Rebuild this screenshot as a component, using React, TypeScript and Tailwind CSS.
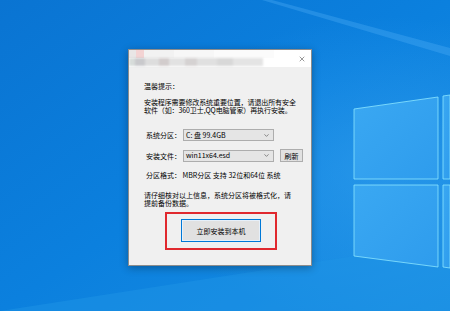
import { ChevronDown, X } from "lucide-react";

const font = { fontFamily: '"Noto Sans CJK SC", "Noto Sans", sans-serif' };

function Wallpaper() {
	return (
		<svg className="absolute inset-0" width="450" height="311" viewBox="0 0 450 311">
			<defs>
				<linearGradient id="bg" x1="0" y1="0" x2="1" y2="1">
					<stop offset="0" stopColor="#0a74d2" />
					<stop offset="0.5" stopColor="#0b80de" />
					<stop offset="1" stopColor="#1a8ee2" />
				</linearGradient>
				<linearGradient id="pane" x1="0" y1="0" x2="1" y2="1">
					<stop offset="0" stopColor="#3aa8f2" />
					<stop offset="1" stopColor="#2e9ced" />
				</linearGradient>
				<radialGradient id="glow" cx="0.85" cy="0.55" r="0.5">
					<stop offset="0" stopColor="#3fa9f5" stopOpacity="0.45" />
					<stop offset="1" stopColor="#3fa9f5" stopOpacity="0" />
				</radialGradient>
			</defs>
			<rect width="450" height="311" fill="url(#bg)" />
			<rect width="450" height="311" fill="url(#glow)" />
			{/* light ray top */}
			<path d="M272 0 L450 48 L450 56 L262 0 Z" fill="#4fb0f5" opacity="0.35" />
			{/* light floor ray */}
			<path d="M0 311 L354 256 L450 250 L450 311 Z" fill="#1d94e6" opacity="0.5" />
			{/* logo panes */}
			<path d="M354 109 L438 97 L438 179 L354 179 Z" fill="url(#pane)" stroke="#8ae6ff" strokeWidth="0.8" />
			<path d="M443 96 L450 95 L450 179 L443 179 Z" fill="url(#pane)" stroke="#8ae6ff" strokeWidth="0.8" />
			<path d="M354 185 L438 185 L438 267 L354 256 Z" fill="url(#pane)" stroke="#8ae6ff" strokeWidth="0.8" />
			<path d="M443 185 L450 185 L450 268 L443 267 Z" fill="url(#pane)" stroke="#8ae6ff" strokeWidth="0.8" />
		</svg>
	);
}

function Select({ value }: { value: string }) {
	return (
		<div className="flex h-[12px] w-[91px] items-center justify-between border border-[#adadad] bg-[#e5e5e5] pl-[2px] pr-[3px]">
			<span className="text-[7px] leading-none text-black">{value}</span>
			<ChevronDown className="h-[7px] w-[7px] text-[#444]" strokeWidth={2} />
		</div>
	);
}

export default function App() {
	return (
		<div className="relative h-[311px] w-[450px] overflow-hidden" style={font}>
			<Wallpaper />
			<div className="relative pl-[128px] pt-[49px]">
				<div className="flex h-[217px] w-[184px] flex-col overflow-hidden border border-[#8c8c8c] bg-[#f0f0f0] shadow-[0_2px_8px_rgba(0,0,0,0.3)]">
					{/* title bar, blurred */}
					<div className="flex h-[17px] shrink-0 items-center justify-between bg-white pr-[5px]">
						<div className="flex h-full flex-col">
							<div className="flex h-[8px]">
								<div className="w-[7px] bg-[#e9e6e6]" />
								<div className="w-[8px] bg-[#f3d3d3]" />
								<div className="w-[30px] bg-[#f2f2f2]" />
								<div className="w-[40px] bg-[#f7f7f7]" />
								<div className="w-[60px] bg-[#fbfbfb]" />
							</div>
							<div className="flex h-[8px] blur-[1px]">
								<div className="w-[6px] bg-[#d7dcda]" />
								<div className="w-[10px] bg-[#c9c9cc]" />
								<div className="w-[14px] bg-[#ddd]" />
								<div className="w-[10px] bg-[#d2cccc]" />
								<div className="w-[16px] bg-[#e2e2e2]" />
								<div className="w-[12px] bg-[#d5d2d2]" />
								<div className="w-[20px] bg-[#e0e0e0]" />
								<div className="w-[16px] bg-[#d8d8d8]" />
								<div className="w-[30px] bg-[#e4e4e4]" />
							</div>
						</div>
						<X className="h-[8px] w-[8px] text-[#333]" strokeWidth={1.5} />
					</div>

					<div className="flex flex-col whitespace-nowrap pl-[15px] pr-[6px] pt-[15px] text-[7px] leading-[8px] text-black">
						<div className="h-[8px]">温馨提示：</div>
						<div className="mt-[8px] h-[8px] tracking-[-0.1px]">安装程序需要修改系统重要位置，请退出所有安全</div>
						<div className="h-[8px] tracking-[-0.1px]">软件（如：360卫士,QQ电脑管家）再执行安装。</div>

						<div className="mt-[15px] flex items-center pl-[2px]">
							<span className="w-[37px]">系统分区：</span>
							<Select value="C: 盘 99.4GB" />
						</div>
						<div className="mt-[8px] flex items-center pl-[2px]">
							<span className="w-[37px]">安装文件：</span>
							<Select value="win11x64.esd" />
							<div className="ml-[6px] flex h-[13px] w-[23px] items-center justify-center border border-[#adadad] bg-[#e1e1e1]">
								刷新
							</div>
						</div>
						<div className="mt-[9px] h-[8px] pl-[2px]">分区格式：&nbsp;MBR分区 支持 32位和64位 系统</div>

						<div className="mt-[12px] h-[8px]">请仔细核对以上信息，系统分区将被格式化，请</div>
						<div className="h-[8px]">提前备份数据。</div>

						<div className="mt-[5px] flex pl-[21px]">
							<div className="flex h-[38px] w-[112px] items-start justify-center border-2 border-[#e0282e] pt-[5px]">
								<button className="flex h-[23px] w-[80px] items-center justify-center border border-[#0078d7] bg-[#e1e1e1] text-[7px] text-black shadow-[inset_0_0_0_1px_#e6f0fa]">
									立即安装到本机
								</button>
							</div>
						</div>
					</div>
				</div>
			</div>
		</div>
	);
}
